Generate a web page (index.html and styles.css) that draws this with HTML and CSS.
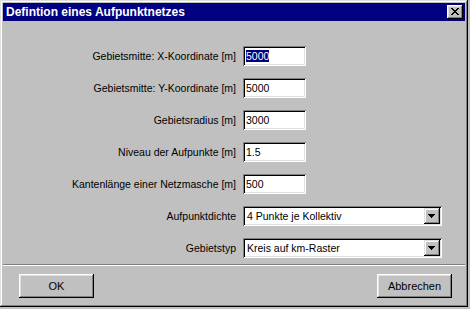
FILE: index.html
```html
<!DOCTYPE html>
<html lang="de">
<head>
<meta charset="utf-8">
<title>Defintion eines Aufpunktnetzes</title>
<link rel="stylesheet" href="styles.css">
</head>
<body>
<div class="window">
  <div class="titlebar">
    <span class="title">Defintion eines Aufpunktnetzes</span>
    <span class="close">
      <svg width="8" height="7" viewBox="0 0 8 7" shape-rendering="crispEdges">
        <path d="M0 0h2v1H0zM6 0h2v1H6zM1 1h2v1H1zM5 1h2v1H5zM2 2h4v1H2zM3 3h2v1H3zM2 4h4v1H2zM1 5h2v1H1zM5 5h2v1H5zM0 6h2v1H0zM6 6h2v1H6z" fill="#000"/>
      </svg>
    </span>
  </div>
  <div class="body">
    <div class="form">
      <label class="lbl">Gebietsmitte: X-Koordinate [m]</label>
      <div class="field"><span class="sel">5000</span></div>
      <label class="lbl">Gebietsmitte: Y-Koordinate [m]</label>
      <div class="field">5000</div>
      <label class="lbl">Gebietsradius [m]</label>
      <div class="field">3000</div>
      <label class="lbl">Niveau der Aufpunkte [m]</label>
      <div class="field">1.5</div>
      <label class="lbl">Kantenlänge einer Netzmasche [m]</label>
      <div class="field">500</div>
      <label class="lbl">Aufpunktdichte</label>
      <div class="combo"><span class="combo-text">4 Punkte je Kollektiv</span><span class="arrow"><svg width="7" height="4" viewBox="0 0 7 4" shape-rendering="crispEdges"><path d="M0 0h7v1H0zM1 1h5v1H1zM2 2h3v1H2zM3 3h1v1H3z" fill="#000"/></svg></span></div>
      <label class="lbl">Gebietstyp</label>
      <div class="combo"><span class="combo-text">Kreis auf km-Raster</span><span class="arrow"><svg width="7" height="4" viewBox="0 0 7 4" shape-rendering="crispEdges"><path d="M0 0h7v1H0zM1 1h5v1H1zM2 2h3v1H2zM3 3h1v1H3z" fill="#000"/></svg></span></div>
    </div>
  </div>
  <div class="footer">
    <button class="btn">OK</button>
    <button class="btn">Abbrechen</button>
  </div>
</div>
</body>
</html>
```

FILE: styles.css
```css
html, body {
  margin: 0;
  padding: 0;
  background: #c0c0c0;
}
body {
  width: 470px;
  height: 309px;
  overflow: hidden;
  font-family: "Liberation Sans", Arial, sans-serif;
}
.window {
  width: 468px;
  height: 307px;
  box-sizing: border-box;
  padding: 3px;
  background: #c0c0c0;
  box-shadow: inset -1px -1px #000, inset 1px 1px #dfdfdf, inset -2px -2px #808080, inset 2px 2px #fff;
  display: flex;
  flex-direction: column;
}
.titlebar {
  height: 18px;
  background: #000080;
  display: flex;
  align-items: center;
  justify-content: space-between;
  padding: 0 2px 0 3px;
}
.title {
  color: #fff;
  font-weight: bold;
  font-size: 12px;
  line-height: 18px;
}
.close {
  width: 16px;
  height: 14px;
  box-sizing: border-box;
  background: #c0c0c0;
  box-shadow: inset -1px -1px #000, inset 1px 1px #fff, inset -2px -2px #808080, inset 2px 2px #dfdfdf;
  display: flex;
  align-items: center;
  justify-content: center;
  padding: 0 1px 1px 0;
}
.close svg { display: block; }
.body {
  flex: 1;
  padding-top: 25px;
}
.form {
  display: grid;
  grid-template-columns: 233px auto;
  column-gap: 7px;
  row-gap: 12px;
  align-items: center;
  justify-items: start;
}
.lbl {
  justify-self: end;
  font-size: 10.5px;
  color: #000;
}
.field {
  width: 63px;
  height: 20px;
  box-sizing: border-box;
  background: #fff;
  box-shadow: inset 1px 1px #808080, inset -1px -1px #fff, inset 2px 2px #000, inset -2px -2px #dfdfdf;
  padding: 3px 3px 0 3px;
  font-size: 10.5px;
  line-height: 14px;
}
.sel {
  background: #000080;
  color: #fff;
}
.combo {
  width: 199px;
  height: 20px;
  box-sizing: border-box;
  background: #fff;
  box-shadow: inset 1px 1px #808080, inset -1px -1px #fff, inset 2px 2px #000, inset -2px -2px #dfdfdf;
  padding: 2px;
  display: flex;
  align-items: center;
  justify-content: space-between;
  font-size: 10.5px;
}
.combo-text { padding-left: 2px; }
.arrow {
  width: 16px;
  height: 16px;
  box-sizing: border-box;
  background: #c0c0c0;
  box-shadow: inset -1px -1px #000, inset 1px 1px #dfdfdf, inset -2px -2px #808080, inset 2px 2px #fff;
  display: flex;
  align-items: center;
  justify-content: center;
  padding: 0 1px 1px 0;
}
.arrow svg { display: block; }
.footer {
  height: 41px;
  margin-bottom: -1px;
  box-sizing: border-box;
  border-top: 1px solid #808080;
  box-shadow: inset 0 1px #fff;
  display: flex;
  justify-content: space-between;
  align-items: flex-start;
  padding: 9px 13px 0 16px;
}
.btn {
  width: 75px;
  height: 24px;
  margin: 0;
  border: none;
  background: #c0c0c0;
  box-shadow: inset -1px -1px #000, inset 1px 1px #fff, inset -2px -2px #808080, inset 2px 2px #dfdfdf;
  font-family: "Liberation Sans", Arial, sans-serif;
  font-size: 11px;
  color: #000;
  padding: 0;
}
```
